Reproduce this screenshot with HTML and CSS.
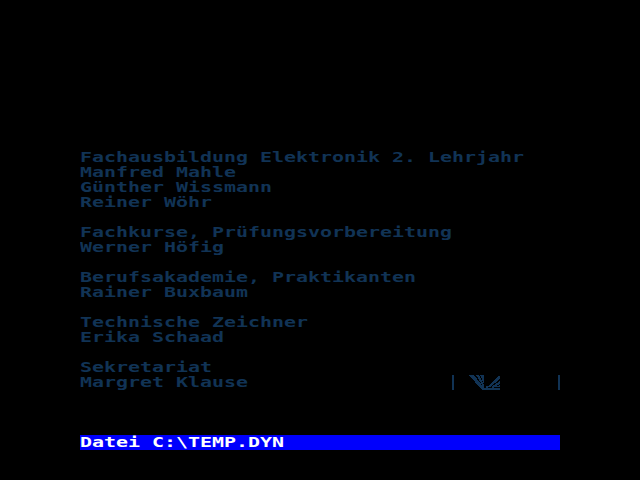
FILE: index.html
```
<!DOCTYPE html>
<html lang="de">
<head>
<meta charset="utf-8">
<title>Datei C:\TEMP.DYN</title>
<link rel="stylesheet" href="styles.css">
</head>
<body>
<main class="screen">
<pre class="text listing">Fachausbildung Elektronik 2. Lehrjahr
Manfred Mahle
Günther Wissmann
Reiner Wöhr

Fachkurse, Prüfungsvorbereitung
Werner Höfig

Berufsakademie, Praktikanten
Rainer Buxbaum

Technische Zeichner
Erika Schaad

Sekretariat
Margret Klause</pre>
<div class="mark">
<svg class="logo" width="31" height="15" viewBox="0 0 31 15" shape-rendering="crispEdges">
<path d="M0 0H5L15 13V15H13ZM7 0H10L15 10V13ZM11 0H15V9ZM13 13H31V15H13ZM19 11L29 1H31V4L21 12H19ZM22 12L31 6V9L24 13ZM26 12L31 10V12ZM17 11H19V13H17Z"/>
</svg>
</div>
<footer class="status"><span class="text">Datei C:\TEMP.DYN</span></footer>
</main>
</body>
</html>
```
FILE: styles.css
```
body {
  margin: 0;
  background: #000;
}

.screen {
  box-sizing: border-box;
  width: 640px;
  height: 480px;
  padding: 150px 80px 30px;
  display: flex;
  flex-direction: column;
  overflow: hidden;
}

.text {
  margin: 0;
  display: block;
  width: 337px;
  font: bold 14px/15px "DejaVu Sans Mono", monospace;
  white-space: pre;
  transform: scaleX(1.4238);
  transform-origin: 0 0;
}

.listing {
  height: 240px;
  color: #113355;
}

.mark {
  box-sizing: border-box;
  align-self: flex-end;
  width: 108px;
  height: 15px;
  margin-top: -15px;
  padding-left: 15px;
  border: solid #113355;
  border-width: 0 2px;
}

.logo {
  display: block;
  fill: #113355;
}

.status {
  height: 15px;
  margin-top: auto;
  background: #0000fc;
  color: #fff;
}
```
